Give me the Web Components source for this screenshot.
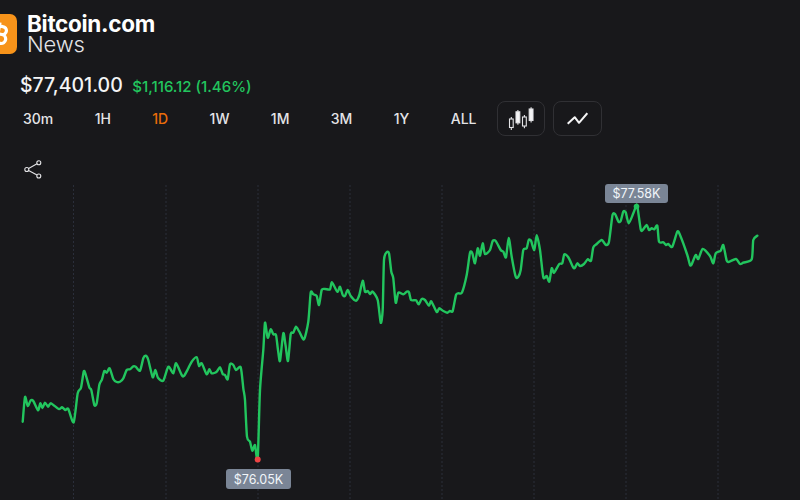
<!DOCTYPE html>
<html lang="en"><head><meta charset="utf-8"><title>Bitcoin.com News</title>
<style>html,body{margin:0;padding:0;background:#18181b;overflow:hidden}</style></head>
<body>
<price-app></price-app>
<script>
const FONT='Inter,"Liberation Sans",sans-serif';
class BrandLogo extends HTMLElement{constructor(){super();this.attachShadow({mode:'open'}).innerHTML=`<style>
:host{display:flex;align-items:center;gap:10px;height:40px;margin-left:-23px;font-family:${FONT}}
svg{display:block;flex:none}
.t{display:flex;flex-direction:column;color:#fff}
.a{font-size:22.5px;font-weight:700;line-height:21px;letter-spacing:-.3px}
.b{font-size:22px;font-weight:300;line-height:21px;letter-spacing:-.2px;color:#e4e4e7}
</style>
<svg width="40" height="40" viewBox="0 0 40 40"><rect width="40" height="40" rx="7" fill="#f7931a"/>
<g transform="rotate(10 22 20)"><path d="M16 12h8.500a4 4 0 0 1 .5 8 4.500 4.500 0 0 1 0 9H16M21 8.500v23M17 20h8" fill="none" stroke="#fff" stroke-width="3.200" stroke-linejoin="round"/></g></svg>
<div class="t"><span class="a">Bitcoin.com</span><span class="b">News</span></div>`}}
customElements.define('brand-logo',BrandLogo);

class PriceLine extends HTMLElement{constructor(){super();this.attachShadow({mode:'open'}).innerHTML=`<style>
:host{display:flex;align-items:baseline;gap:9.500px;font-family:${FONT}}
.p{font-size:19.500px;font-weight:500;color:#f4f4f5}
.c{font-size:15px;font-weight:500;color:#22c55e}
</style><span class="p"><slot name="price"></slot></span><span class="c"><slot name="change"></slot></span>`}}
customElements.define('price-line',PriceLine);

class RangeTab extends HTMLElement{constructor(){super();this.attachShadow({mode:'open'}).innerHTML=`<style>
:host{display:block;font:500 14px ${FONT};color:#e4e4e7}
:host([active]){color:#ea6c0a}
</style><slot></slot>`}}
customElements.define('range-tab',RangeTab);

class IconButton extends HTMLElement{constructor(){super();this.attachShadow({mode:'open'}).innerHTML=`<style>
:host{display:flex;align-items:center;justify-content:center;width:46px;height:33px;border:1px solid #303034;border-radius:8px}
</style><slot></slot>`}}
customElements.define('icon-button',IconButton);

const PTS=[[22.7,421.7],[25,397],[27.7,406],[30.7,400.3],[33.3,401],[38,410.3],[40.3,403.3],[42.3,408],[45,402.7],[48,406.7],[51,403.3],[58.7,409],[62,407.3],[65.3,410],[68.3,409],[73.7,422.3],[77.7,393.3],[81,387.7],[83.7,371.7],[85.3,373.3],[89.3,387.3],[91.3,390],[94.3,405],[96.7,403.3],[99.3,385],[102,379.3],[104.3,371],[106.7,372.7],[109.7,368.3],[113.3,379],[116.7,382],[120,381.7],[123.3,378.3],[126.7,370],[130,369.3],[133.3,366.3],[135.7,366.7],[140,370.7],[143.3,358.3],[145.7,355.7],[148.3,360],[152.7,377.3],[155.3,370],[158,377.7],[163.3,380.7],[168.3,366.7],[173.3,373.3],[176,363.3],[181.7,375],[184,376],[188.3,368.3],[191.7,361.7],[196.7,357.3],[199,366],[201.7,363.3],[206.7,374.3],[209.3,369.3],[211.7,373.3],[216.7,371.7],[220,367.3],[222.7,374],[225,375],[227.7,379.3],[230,364.3],[233.3,365],[236,370],[240.7,367.3],[243.3,388.3],[245,400],[247,436.7],[250,441.7],[252.3,450.7],[255,445],[257.7,459.3],[260,390],[263.3,350],[265,322.7],[267.7,337.7],[270.7,329.3],[273.3,334.3],[276,335],[278,350],[280,361],[283.3,333.3],[285.5,345],[288,361],[290.7,334.3],[293.3,332.7],[296,326.7],[299.3,331.7],[304,339.3],[308.3,321.7],[310.7,292.7],[313.3,294.3],[316.7,296],[319,305],[321.7,290],[325,289],[330,289.3],[332,282.3],[337.3,291.7],[340,286.7],[342.7,295],[345,296],[347.7,290],[350.7,296],[356,300.7],[359.3,295],[362.7,280.7],[365,291.7],[367.7,291],[370,294],[372.7,291.7],[377.7,300],[380.7,322.7],[382.7,310],[384,260],[386.7,252.3],[389,253.3],[391.3,271.7],[393.3,278.3],[395.7,302.7],[398.3,292.7],[403.3,294.3],[406.7,291.7],[409,292.3],[411,300],[416,300.3],[418.7,304.3],[421.7,299],[425,300],[429,305.7],[431.3,301.3],[436.7,312],[439.3,308.3],[443.3,311],[447.3,312.7],[450,311],[452.7,311],[456,295],[458.3,293.3],[462,292.5],[466.7,275],[470,252.7],[472.3,253.3],[475,263.3],[477.7,248.3],[480,255.7],[482.7,243.3],[485,254],[490,250],[492.7,241],[495.7,241],[500.7,250],[503.3,251.7],[506,257.3],[508.7,238],[511.7,256.7],[515.7,276.7],[518.3,276.7],[520.7,270],[523.3,250],[526.7,248.3],[528.7,240],[531,240.7],[534.3,250],[536.7,235.3],[540,250],[543.3,277.3],[546.7,276],[549.3,281.7],[551.7,268.3],[554,272.7],[559.3,264],[562.3,263.3],[564.3,254.3],[568.3,257.3],[573.3,267.7],[575,267.7],[577.3,263.3],[580,266],[584,264],[587.7,259.3],[591,260.7],[593.3,247.3],[596.7,244],[601.7,240],[606,245],[609,241.7],[612.5,215],[615.2,214.3],[618.5,221.7],[620.7,221],[623.3,211.7],[625.7,212.3],[628.7,223.3],[633.3,213.3],[636,206],[637.3,206],[640.7,229.3],[642.7,230],[646.7,225],[649,230],[651.7,228.3],[654.3,229.3],[657.3,225.7],[659,241.7],[663.3,242.3],[666,245],[668.3,244],[672.3,246.7],[677.3,231.7],[680,235],[687.3,255],[690,265],[691.7,264.3],[695.7,255],[698.3,259],[702.7,249],[710,256],[713.3,263.3],[715.7,253.3],[720.7,250.7],[723.3,245],[726.7,260.7],[729.3,261.7],[736,259],[740,264],[743.3,262.7],[751.7,259.3],[753.3,240],[757.3,235.7]];
function smooth(p){let d=`M${p[0]}`;for(let i=0;i<p.length-1;i++){const a=p[i-1]||p[i],b=p[i],c=p[i+1],e=p[i+2]||c,k=.12;
d+=`C${(b[0]+(c[0]-a[0])*k).toFixed(1)} ${(b[1]+(c[1]-a[1])*k).toFixed(1)} ${(c[0]-(e[0]-b[0])*k).toFixed(1)} ${(c[1]-(e[1]-b[1])*k).toFixed(1)} ${c[0]} ${c[1]}`}return d}

class PriceChart extends HTMLElement{constructor(){super();
const grid=[73.5,166,258,350,442,534,626,718].map(x=>`<line x1="${x}" x2="${x}" y1="185" y2="500"/>`).join('');
this.attachShadow({mode:'open'}).innerHTML=`<style>
:host{display:block;position:relative;flex:1;min-height:0}
svg{display:block;position:absolute;left:0;top:0}
.tag{position:absolute;box-sizing:border-box;height:20px;display:flex;align-items:center;justify-content:center;background:#7a8596;border-radius:3px;color:#f1f5f9;font:400 12.500px ${FONT}}
</style>
<svg width="800" height="320" viewBox="0 180 800 320">
<g stroke="#2a2e3a" stroke-width="1" stroke-dasharray="2 2">${grid}</g>
<path d="${smooth(PTS)}" fill="none" stroke="#22c55e" stroke-width="2.400" stroke-linejoin="round" stroke-linecap="round"/>
<circle cx="257.700" cy="459.500" r="3" fill="#ef4444"/><circle cx="636.500" cy="206.500" r="2.800" fill="#22c55e"/>
</svg>
<div class="tag" style="left:605px;top:4px;width:63px;height:19px">$77.58K</div>
<div class="tag" style="left:226px;top:289px;width:65px">$76.05K</div>`}}
customElements.define('price-chart',PriceChart);

class PriceApp extends HTMLElement{constructor(){super();this.attachShadow({mode:'open'}).innerHTML=`<style>
:host{display:flex;flex-direction:column;width:800px;height:500px;background:#18181b;overflow:hidden}
header{padding:14px 0 0 0}
price-line{margin:19px 0 0 20px}
.tabs{display:flex;align-items:center;height:35px;margin-top:4px;padding-left:23px}
.ranges{display:flex;gap:41.400px;margin-top:-1px}
.btns{display:flex;gap:8px;margin-left:20px}
.btns icon-button:last-child{width:47px}
.share{padding:24px 0 0 24px;height:20px;flex:none}
.share svg{display:block}
</style>
<header><brand-logo></brand-logo></header>
<price-line><span slot="price">$77,401.00</span><span slot="change">$1,116.12 (1.46%)</span></price-line>
<div class="tabs"><div class="ranges">
<range-tab>30m</range-tab><range-tab>1H</range-tab><range-tab active>1D</range-tab><range-tab>1W</range-tab><range-tab>1M</range-tab><range-tab>3M</range-tab><range-tab>1Y</range-tab><range-tab>ALL</range-tab>
</div><div class="btns">
<icon-button><svg width="28" height="26" viewBox="0 0 28 26" fill="none" stroke="#e4e4e7" stroke-width="1.100"><rect x="2.500" y="13" width="3.700" height="8.500"/><path d="M4.300 11v2M4.300 21.500v2.500"/><rect x="9" y="5.800" width="3.800" height="11" fill="#f4f4f5"/><path d="M10.900 4v1.800M10.900 16.800v2"/><rect x="15.500" y="11" width="3.800" height="9"/><path d="M17.400 9v2M17.400 20v2.200"/><rect x="22.200" y="3" width="3.800" height="11.500" fill="#f4f4f5"/><path d="M24.100 1.200V3M24.100 14.500v2"/></svg></icon-button>
<icon-button><svg width="22" height="14" viewBox="0 0 22 14" fill="none" stroke="#f4f4f5" stroke-width="2" stroke-linejoin="round"><path d="M1.700 11.800 8.700 5.200 13 10.800 21.300 1.200"/></svg></icon-button>
</div></div>
<div class="share"><svg width="18" height="19" viewBox="0 0 18 19" fill="none" stroke="#e4e4e7" stroke-width="1.100"><circle cx="2.800" cy="9.500" r="2"/><circle cx="14.800" cy="2.800" r="2"/><circle cx="14.800" cy="16" r="2"/><path d="M4.600 8.500 13 3.800M4.600 10.500 13 15"/></svg></div>
<price-chart></price-chart>`}}
customElements.define('price-app',PriceApp);
</script>
</body></html>
